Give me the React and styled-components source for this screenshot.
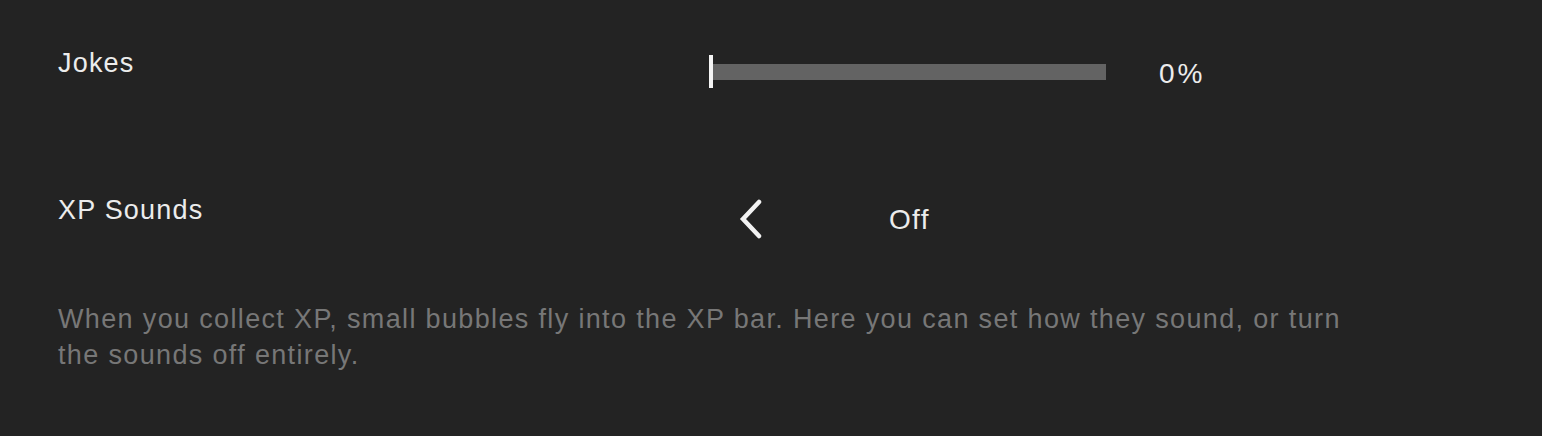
import React from "react";
import styled, { createGlobalStyle } from "styled-components";

const Global = createGlobalStyle`
  html, body { margin: 0; padding: 0; background: #232323; }
  body { font-family: "Liberation Sans", Arial, sans-serif; }
`;

const Panel = styled.div`
  width: 1542px;
  height: 436px;
  box-sizing: border-box;
  background: #232323;
  padding: 44px 58px 0 58px;
  display: flex;
  flex-direction: column;
`;

const Row = styled.div`
  display: grid;
  grid-template-columns: 651px 1fr;
  height: ${(p) => p.$h}px;
`;

const Label = styled.div`
  color: #ececec;
  font-size: 27px;
  letter-spacing: 1.2px;
  line-height: 38px;
`;

const Control = styled.div`
  display: flex;
  align-items: center;
  height: 38px;
  margin-top: 9px;
`;

const Track = styled.div`
  position: relative;
  width: 397px;
  height: 16px;
  background: #636363;
`;

const Thumb = styled.div`
  position: absolute;
  left: 0;
  top: -9px;
  width: 4px;
  height: 33px;
  background: #f4f4f4;
`;

const Value = styled.div`
  color: #ececec;
  font-size: 28px;
  letter-spacing: 3px;
  margin: 3px 0 0 53px;
`;

const ArrowButton = styled.button`
  background: none;
  border: 0;
  padding: 0;
  margin-left: 28px;
  width: 28px;
  height: 40px;
  display: flex;
  align-items: center;
  justify-content: center;
  cursor: pointer;
`;

const OptionText = styled.div`
  color: #ececec;
  font-size: 28px;
  letter-spacing: 1.3px;
  margin: 2px 0 0 124px;
`;

const Description = styled.p`
  margin: 20px 0 0 0;
  width: 1305px;
  color: #777777;
  font-size: 27px;
  letter-spacing: 1.35px;
  line-height: 36px;
`;

export default function App() {
  return (
    <>
      <Global />
      <Panel>
        <Row $h={147}>
          <Label>Jokes</Label>
          <Control>
            <Track>
              <Thumb />
            </Track>
            <Value>0%</Value>
          </Control>
        </Row>
        <Row $h={90}>
          <Label>XP Sounds</Label>
          <Control>
            <ArrowButton aria-label="Previous">
              <svg width="28" height="40" viewBox="0 0 28 40">
                <path d="M22 3 L6 20 L22 37" fill="none" stroke="#f2f2f2" strokeWidth="4.5" strokeLinecap="round" strokeLinejoin="miter" />
              </svg>
            </ArrowButton>
            <OptionText>Off</OptionText>
          </Control>
        </Row>
        <Description>
          When you collect XP, small bubbles fly into the XP bar. Here you can set how they sound, or turn the sounds off entirely.
        </Description>
      </Panel>
    </>
  );
}
